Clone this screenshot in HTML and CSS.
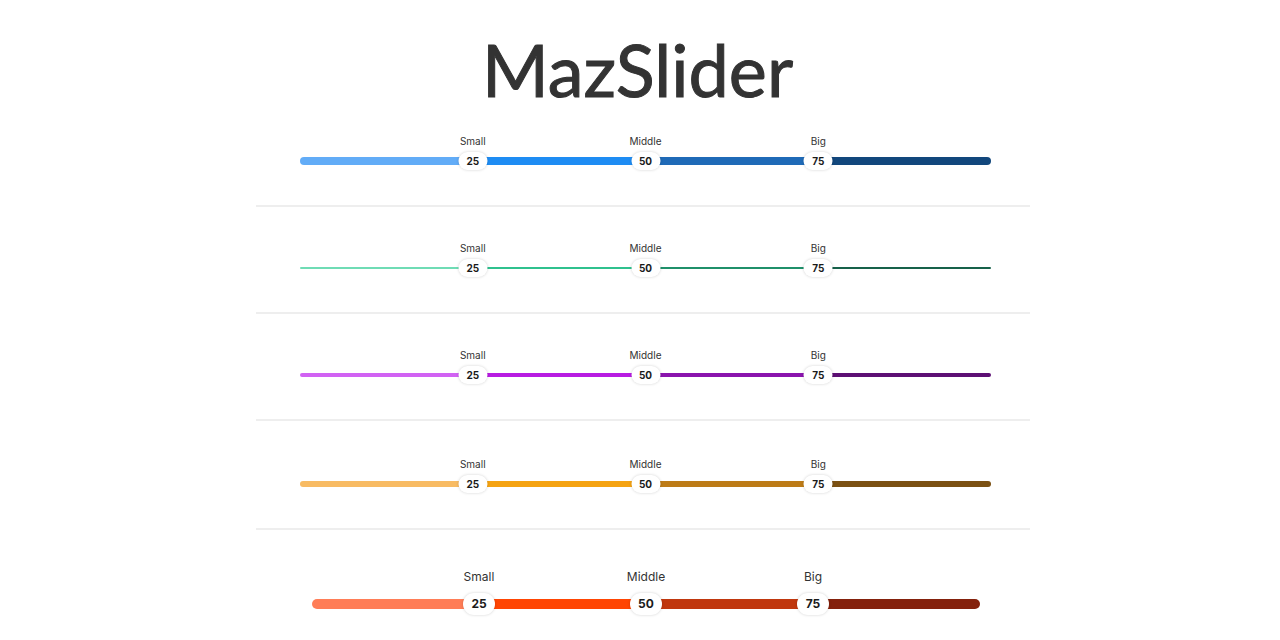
FILE: index.html
```html
<!DOCTYPE html>
<html>
<head>
  <title>MazSlider</title>
  <link rel="stylesheet" href="styles.css">
</head>
<body>
  <main class="page">
    <h1 class="title">MazSlider</h1>

    <section class="row">
      <div class="slider blue">
        <div class="rail">
          <div class="track"><span class="seg s1"></span><span class="seg s2"></span><span class="seg s3"></span><span class="seg s4"></span></div>
          <div class="thumb" style="left: 25%"><span class="label">Small</span>25</div>
          <div class="thumb" style="left: 50%"><span class="label">Middle</span>50</div>
          <div class="thumb" style="left: 75%"><span class="label">Big</span>75</div>
        </div>
      </div>
    </section>

    <section class="row">
      <div class="slider green">
        <div class="rail">
          <div class="track"><span class="seg s1"></span><span class="seg s2"></span><span class="seg s3"></span><span class="seg s4"></span></div>
          <div class="thumb" style="left: 25%"><span class="label">Small</span>25</div>
          <div class="thumb" style="left: 50%"><span class="label">Middle</span>50</div>
          <div class="thumb" style="left: 75%"><span class="label">Big</span>75</div>
        </div>
      </div>
    </section>

    <section class="row">
      <div class="slider purple">
        <div class="rail">
          <div class="track"><span class="seg s1"></span><span class="seg s2"></span><span class="seg s3"></span><span class="seg s4"></span></div>
          <div class="thumb" style="left: 25%"><span class="label">Small</span>25</div>
          <div class="thumb" style="left: 50%"><span class="label">Middle</span>50</div>
          <div class="thumb" style="left: 75%"><span class="label">Big</span>75</div>
        </div>
      </div>
    </section>

    <section class="row row-thick">
      <div class="slider orange">
        <div class="rail">
          <div class="track"><span class="seg s1"></span><span class="seg s2"></span><span class="seg s3"></span><span class="seg s4"></span></div>
          <div class="thumb" style="left: 25%"><span class="label">Small</span>25</div>
          <div class="thumb" style="left: 50%"><span class="label">Middle</span>50</div>
          <div class="thumb" style="left: 75%"><span class="label">Big</span>75</div>
        </div>
      </div>
    </section>

    <section class="row row-lg">
      <div class="slider red big">
        <div class="rail">
          <div class="track"><span class="seg s1"></span><span class="seg s2"></span><span class="seg s3"></span><span class="seg s4"></span></div>
          <div class="thumb" style="left: 25%"><span class="label">Small</span>25</div>
          <div class="thumb" style="left: 50%"><span class="label">Middle</span>50</div>
          <div class="thumb" style="left: 75%"><span class="label">Big</span>75</div>
        </div>
      </div>
    </section>
  </main>
</body>
</html>
```

FILE: styles.css
```css
body {
  margin: 0;
  background: #fff;
  color: #333;
  font-family: "Inter", "Liberation Sans", sans-serif;
}
.page {
  width: 774px;
  margin-left: 256px;
}
.title {
  margin: 33px 0 0;
  padding-right: 11px;
  font-family: "Lato", sans-serif;
  font-weight: 400;
  font-size: 72px;
  line-height: 72px;
  text-align: center;
  color: #333;
  -webkit-text-stroke: 1px #333;
}

.row {
  padding: 34px 39px 35px 44px;
  border-bottom: 2px solid #eee;
}
.row:first-of-type {
  padding-top: 29px;
  padding-bottom: 35px;
}
.row-thick {
  padding-top: 36px;
}
.row-lg {
  padding: 39px 50px 30px 56px;
  border-bottom: none;
}

.slider {
  padding-top: 18px;
  --h: 8px;
}
.rail {
  position: relative;
  height: 18px;
  display: flex;
  align-items: center;
}
.track {
  flex: 1;
  display: flex;
  height: var(--h);
  border-radius: 10px;
  overflow: hidden;
}
.seg {
  flex: 1;
}

.thumb {
  position: absolute;
  top: 0;
  width: 29px;
  height: 18px;
  transform: translateX(-50%);
  background: #fff;
  border-radius: 10px;
  box-shadow: 0 0 3px rgba(0, 0, 0, 0.18);
  font-size: 10px;
  font-weight: 700;
  line-height: 18px;
  text-align: center;
  color: #1a1a1a;
}
.label {
  position: absolute;
  left: 50%;
  bottom: calc(100% + 5px);
  transform: translateX(-50%);
  font-size: 10px;
  font-weight: 400;
  line-height: 12px;
  white-space: nowrap;
  color: #333;
}

.blue { --h: 8px; }
.blue .s1 { background: #62acf7; }
.blue .s2 { background: #1e8cf3; }
.blue .s3 { background: #1f6ab7; }
.blue .s4 { background: #12477c; }

.green { --h: 2px; }
.green .s1 { background: #6fdcb5; }
.green .s2 { background: #2fc18e; }
.green .s3 { background: #1f906a; }
.green .s4 { background: #16614a; }

.purple { --h: 4px; }
.purple .s1 { background: #d162f3; }
.purple .s2 { background: #b81ce2; }
.purple .s3 { background: #8a14ad; }
.purple .s4 { background: #5d0f74; }

.orange { --h: 6px; }
.orange .s1 { background: #f8bb63; }
.orange .s2 { background: #f5a312; }
.orange .s3 { background: #bd7b16; }
.orange .s4 { background: #7b5012; }

.red { --h: 10px; }
.red .s1 { background: #ff7d57; }
.red .s2 { background: #ff4503; }
.red .s3 { background: #c0370e; }
.red .s4 { background: #84210c; }

.big {
  padding-top: 24px;
}
.big .rail {
  height: 22px;
}
.big .thumb {
  width: 32px;
  height: 22px;
  line-height: 22px;
  font-size: 12px;
  border-radius: 12px;
}
.big .label {
  bottom: calc(100% + 8px);
  font-size: 12px;
  line-height: 16px;
}
```
